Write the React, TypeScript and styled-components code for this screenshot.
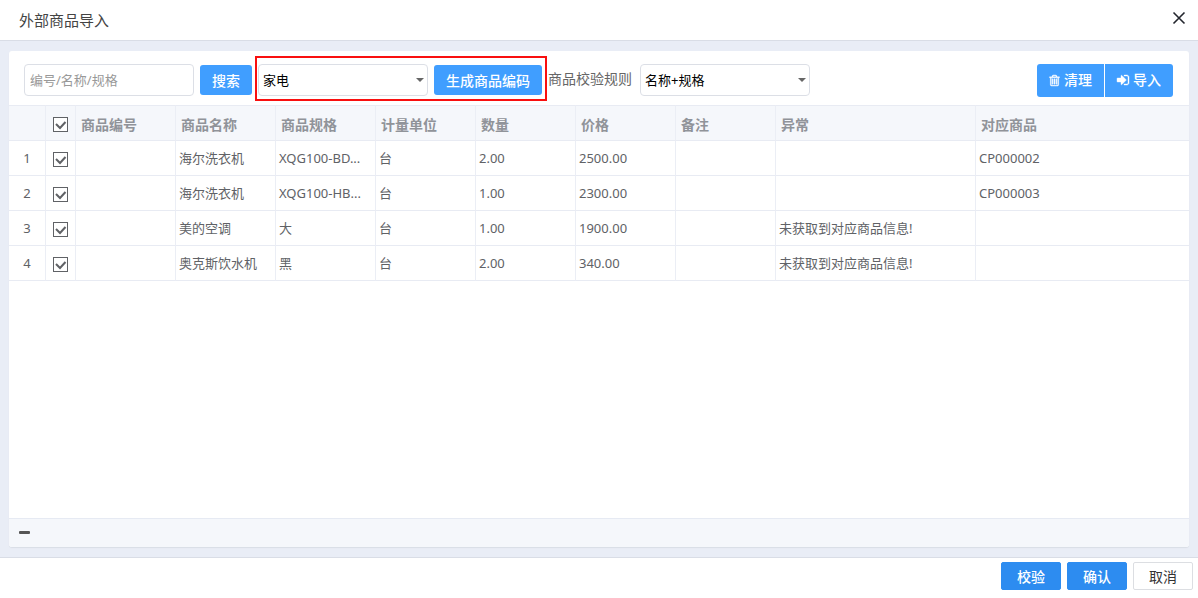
import React from "react";
import styled, { createGlobalStyle, css } from "styled-components";

const GlobalStyle = createGlobalStyle`
  *, *::before, *::after { box-sizing: border-box; }
  body { margin: 0; }
  body, button, input, select {
    font-family: "Noto Sans", "Noto Sans CJK SC", sans-serif;
    font-size: 13px;
  }
`;

const Dialog = styled.div`
  display: flex;
  flex-direction: column;
  min-height: 100vh;
  background: #fff;
`;

const TitleBar = styled.header`
  display: flex;
  align-items: center;
  justify-content: space-between;
  height: 41px;
  padding: 0 12px 0 19px;
  border-bottom: 1px solid #d9dde6;
`;

const Title = styled.h1`
  margin: 0;
  font-size: 15px;
  line-height: 24px;
  font-weight: 400;
  color: #444;
`;

const CloseButton = styled.button`
  display: flex;
  padding: 0;
  margin-bottom: 4px;
  border: 0;
  background: none;
  color: #23262e;
  cursor: pointer;
`;

const Body = styled.main`
  flex: 1;
  display: flex;
  padding: 10px 9px;
  background: #e9edf6;
`;

const Panel = styled.section`
  flex: 1;
  min-width: 0;
  display: flex;
  flex-direction: column;
  overflow: hidden;
  border-radius: 3px;
  background: #fff;
  box-shadow: 0 1px 1px #d9dde6;
`;

const Toolbar = styled.form`
  display: flex;
  align-items: center;
  gap: 6px;
  height: 54px;
  padding: 4px 16px 0 15px;
`;

const controlBox = css`
  width: 170px;
  height: 32px;
  border: 1px solid #dcdfe6;
  border-radius: 4px;
  background: #fff;
  outline: none;
`;

const SearchInput = styled.input`
  ${controlBox}
  padding: 0 5px;
  color: #606266;
  &::placeholder { color: #999; opacity: 1; }
`;

const SelectBox = styled.div`
  position: relative;
  svg {
    position: absolute;
    right: 4px;
    top: 14px;
    pointer-events: none;
  }
`;

const SelectInput = styled.select`
  ${controlBox}
  display: block;
  appearance: none;
  padding: 0 20px 0 4px;
  color: #000;
`;

const PrimaryButton = styled.button`
  height: 30px;
  padding: 0 12px;
  border: 0;
  border-radius: 3px;
  background: #409eff;
  color: #fff;
  font-size: 14px;
  font-weight: 500;
  white-space: nowrap;
  cursor: pointer;
`;

const HighlightGroup = styled.div`
  position: relative;
  display: flex;
  align-items: center;
  gap: 6px;
  &::after {
    content: "";
    position: absolute;
    inset: -8px -5px -5px -3px;
    border: 2px solid #f90f0f;
    pointer-events: none;
  }
`;

const RuleField = styled.div`
  display: flex;
  align-items: center;
  gap: 8px;
`;

const RuleLabel = styled.label`
  padding-bottom: 2px;
  font-size: 14px;
  line-height: 20px;
  color: #666;
  white-space: nowrap;
`;

const ButtonGroup = styled.div`
  display: flex;
  gap: 1px;
  margin-left: auto;
`;

const ActionButton = styled.button`
  display: flex;
  align-items: center;
  gap: 3px;
  height: 33px;
  padding: 0 12px 0 11px;
  border: 0;
  background: #409eff;
  color: #fff;
  font-size: 14px;
  line-height: 20px;
  font-weight: 500;
  white-space: nowrap;
  cursor: pointer;
  svg { stroke: currentColor; stroke-width: 50; }
  &:first-child { border-radius: 3px 0 0 3px; }
  &:last-child { border-radius: 0 3px 3px 0; }
`;

const Table = styled.table`
  width: 100%;
  table-layout: fixed;
  border-collapse: separate;
  border-spacing: 0;
`;

const cell = css`
  height: 35px;
  border-right: 1px solid #ebeef5;
  border-bottom: 1px solid #e8ebf3;
  line-height: 20px;
  text-align: left;
  white-space: nowrap;
  overflow: hidden;
  text-overflow: ellipsis;
  &:last-child { border-right: 0; }
`;

const HeadCell = styled.th`
  ${cell}
  height: 36px;
  padding: 3px 5px 0;
  border-top: 1px solid #e8ebf3;
  background: #f5f7fb;
  color: #909399;
  font-size: 14px;
  font-weight: 700;
`;

const Cell = styled.td<{ $center?: boolean }>`
  ${cell}
  padding: 0 3px;
  color: #606266;
  ${(p) => p.$center && "text-align: center;"}
`;

const CheckBox = styled.span`
  display: grid;
  width: 15px;
  height: 15px;
  margin: 3px auto 0;
  color: #606266;
  > * { grid-area: 1 / 1; }
  svg { z-index: 1; pointer-events: none; visibility: hidden; }
  input:checked + svg { visibility: visible; }
`;

const HeadCheckBox = styled(CheckBox)`
  margin-top: 0;
`;

const CheckInput = styled.input`
  appearance: none;
  width: 15px;
  height: 15px;
  margin: 0;
  border: 1px solid #606266;
  background: #fff;
`;

const SummaryBar = styled.div`
  display: flex;
  align-items: center;
  height: 29px;
  margin-top: auto;
  padding: 0 10px 2px;
  border-top: 1px solid #e6eaf3;
  background: #f5f7fb;
`;

const CollapseButton = styled.button`
  display: flex;
  padding: 0;
  border: 0;
  background: none;
  color: #555;
  cursor: pointer;
`;

const Footer = styled.footer`
  display: flex;
  justify-content: flex-end;
  gap: 6px;
  height: 41px;
  padding: 4px 5px 0;
  border-top: 1px solid #d9dde6;
`;

const FooterButton = styled.button<{ $primary?: boolean }>`
  width: 60px;
  height: 28px;
  padding: 0 0 1px;
  border: 1px solid ${(p) => (p.$primary ? "#2d8cf0" : "#dcdee2")};
  border-radius: 2px;
  background: ${(p) => (p.$primary ? "#2d8cf0" : "#fff")};
  color: ${(p) => (p.$primary ? "#fff" : "#333")};
  font-size: 14px;
  font-weight: ${(p) => (p.$primary ? 500 : 400)};
  cursor: pointer;
`;

const Caret = () => (
  <svg width="8" height="4" viewBox="0 0 8 4" aria-hidden="true">
    <path d="M0 0h8L4 4z" fill="#666" />
  </svg>
);

const TrashIcon = () => (
  <svg width="13" height="13" viewBox="0 0 1792 1792" fill="currentColor" aria-hidden="true">
    <path d="M704 1376v-704q0-14-9-23t-23-9h-64q-14 0-23 9t-9 23v704q0 14 9 23t23 9h64q14 0 23-9t9-23zm256 0v-704q0-14-9-23t-23-9h-64q-14 0-23 9t-9 23v704q0 14 9 23t23 9h64q14 0 23-9t9-23zm256 0v-704q0-14-9-23t-23-9h-64q-14 0-23 9t-9 23v704q0 14 9 23t23 9h64q14 0 23-9t9-23zm128 84v-948h-896v948q0 22 7 40.500t14.500 27 10.500 8.500h832q3 0 10.500-8.500t14.500-27 7-40.500zm-672-1076h448l-48-117q-7-9-17-11h-317q-10 2-17 11zm928 32v64q0 14-9 23t-23 9h-96v948q0 83-47 143.500t-113 60.500h-832q-66 0-113-58.500t-47-141.500v-952h-96q-14 0-23-9t-9-23v-64q0-14 9-23t23-9h309l70-167q15-37 54-63t79-26h320q40 0 79 26t54 63l70 167h309q14 0 23 9t9 23z" />
  </svg>
);

const ImportIcon = () => (
  <svg width="14" height="14" viewBox="0 0 1792 1792" fill="currentColor" aria-hidden="true">
    <path d="M1312 896q0 26-19 45l-544 544q-19 19-45 19t-45-19-19-45v-288h-448q-26 0-45-19t-19-45v-384q0-26 19-45t45-19h448v-288q0-26 19-45t45-19 45 19l544 544q19 19 19 45zm352-352v704q0 119-84.500 203.500t-203.500 84.500h-320q-13 0-22.500-9.500t-9.500-22.500q0-4-1-20t-.5-26.500 3-23.500 10-19.500 20.500-6.500h320q66 0 113-47t47-113v-704q0-66-47-113t-113-47h-312l-11.500-1-11.500-3-8-5.500-7-9-2-13.500q0-4-1-20t-.5-26.500 3-23.500 10-19.500 20.500-6.500h320q119 0 203.500 84.500t84.500 203.500z" />
  </svg>
);

const Tick = () => (
  <svg width="15" height="15" viewBox="0 0 15 15" fill="none" aria-hidden="true">
    <path d="M3 7l4 4 5.500-6" stroke="currentColor" strokeWidth="2" />
  </svg>
);

const columnWidths = [37, 30, 100, 100, 100, 100, 100, 100, 100, 200];
const headings = ["商品编号", "商品名称", "商品规格", "计量单位", "数量", "价格", "备注", "异常", "对应商品"];
const missing = "未获取到对应商品信息!";
const rows = [
  ["", "海尔洗衣机", "XQG100-BD...", "台", "2.00", "2500.00", "", "", "CP000002"],
  ["", "海尔洗衣机", "XQG100-HB...", "台", "1.00", "2300.00", "", "", "CP000003"],
  ["", "美的空调", "大", "台", "1.00", "1900.00", "", missing, ""],
  ["", "奥克斯饮水机", "黑", "台", "2.00", "340.00", "", missing, ""],
];

export default function App() {
  return (
    <>
      <GlobalStyle />
      <Dialog role="dialog" aria-labelledby="dialog-title">
        <TitleBar>
          <Title id="dialog-title">外部商品导入</Title>
          <CloseButton aria-label="关闭">
            <svg width="14" height="14" viewBox="0 0 14 14" stroke="currentColor" strokeWidth="1.6" aria-hidden="true">
              <path d="M1.500 1.500l11 11M12.500 1.500l-11 11" />
            </svg>
          </CloseButton>
        </TitleBar>
        <Body>
          <Panel>
            <Toolbar onSubmit={(e) => e.preventDefault()}>
              <SearchInput aria-label="编号/名称/规格" placeholder="编号/名称/规格" />
              <PrimaryButton type="submit">搜索</PrimaryButton>
              <HighlightGroup>
                <SelectBox>
                  <SelectInput aria-label="商品分类">
                    <option>家电</option>
                  </SelectInput>
                  <Caret />
                </SelectBox>
                <PrimaryButton type="button">生成商品编码</PrimaryButton>
              </HighlightGroup>
              <RuleField>
                <RuleLabel htmlFor="rule">商品校验规则</RuleLabel>
                <SelectBox>
                  <SelectInput id="rule">
                    <option>名称+规格</option>
                  </SelectInput>
                  <Caret />
                </SelectBox>
              </RuleField>
              <ButtonGroup>
                <ActionButton type="button"><TrashIcon />清理</ActionButton>
                <ActionButton type="button"><ImportIcon />导入</ActionButton>
              </ButtonGroup>
            </Toolbar>
            <Table>
              <colgroup>
                {columnWidths.map((w, i) => <col key={i} width={w} />)}
                <col />
              </colgroup>
              <thead>
                <tr>
                  <HeadCell />
                  <HeadCell>
                    <HeadCheckBox>
                      <CheckInput type="checkbox" defaultChecked aria-label="全选" />
                      <Tick />
                    </HeadCheckBox>
                  </HeadCell>
                  {headings.map((h) => <HeadCell key={h} scope="col">{h}</HeadCell>)}
                </tr>
              </thead>
              <tbody>
                {rows.map((row, r) => (
                  <tr key={r}>
                    <Cell $center>{r + 1}</Cell>
                    <Cell>
                      <CheckBox>
                        <CheckInput type="checkbox" defaultChecked aria-label={`选择第${r + 1}行`} />
                        <Tick />
                      </CheckBox>
                    </Cell>
                    {row.map((value, c) => <Cell key={c}>{value}</Cell>)}
                  </tr>
                ))}
              </tbody>
            </Table>
            <SummaryBar>
              <CollapseButton aria-label="收起">
                <svg width="11" height="3" viewBox="0 0 11 3" aria-hidden="true">
                  <rect width="11" height="3" rx="1" fill="currentColor" />
                </svg>
              </CollapseButton>
            </SummaryBar>
          </Panel>
        </Body>
        <Footer>
          <FooterButton $primary>校验</FooterButton>
          <FooterButton $primary>确认</FooterButton>
          <FooterButton>取消</FooterButton>
        </Footer>
      </Dialog>
    </>
  );
}
